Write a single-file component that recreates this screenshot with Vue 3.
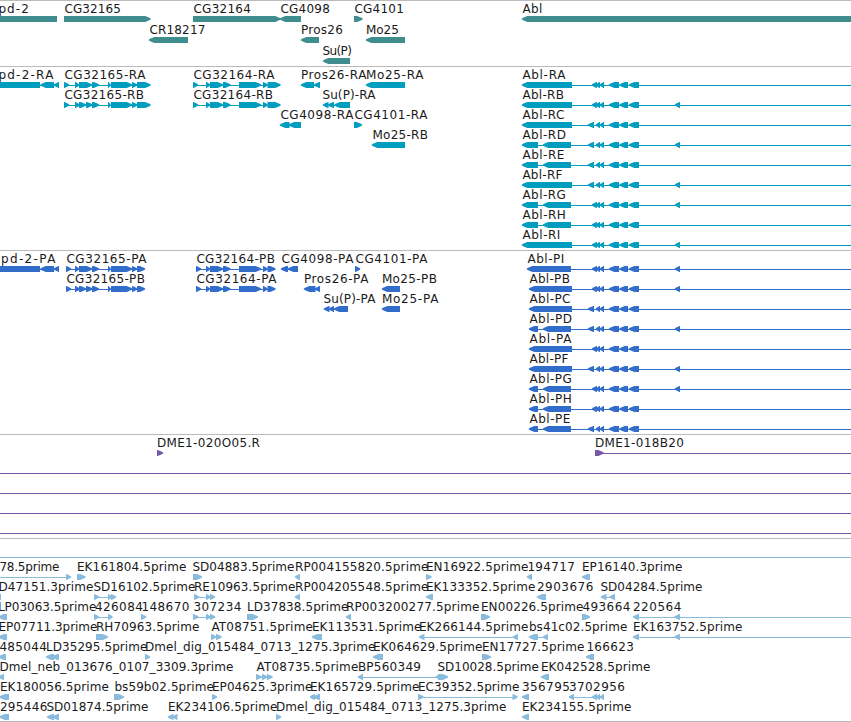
<script setup>
const HEAD = 5.5

// Feature: [row, label, label start, label end, strand, exons, connector end]
const f = (row, label, x, end, dir, exons, lineTo) => ({ row, label, x, end, dir, exons, lineTo })

const geneFeatures = [
  f(0, 'pd-2', -2, 28.5, 'l', [[-12, 57]]),
  f(0, 'CG32165', 64, 120.5, 'r', [[64, 151]]),
  f(1, 'CR18217', 149, 205, 'l', [[148.5, 188]]),
  f(0, 'CG32164', 193, 250.5, 'r', [[193, 281]]),
  f(0, 'CG4098', 280, 329.5, 'l', [[279.5, 301]]),
  f(1, 'Pros26', 300.5, 342.5, 'l', [[300.5, 319]]),
  f(2, 'Su(P)', 322, 351.5, 'l', [[322.5, 350]]),
  f(0, 'CG4101', 354, 403.5, 'r', [[354, 363]]),
  f(1, 'Mo25', 365.5, 398.5, 'l', [[365.5, 405]]),
  f(0, 'Abl', 522, 542, 'l', [[521.5, 870]]),
]

const ablTail = [[608.5, 619], [619, 628], [628.5, 639]]
const near = [[591.5, 597], [595.5, 600], [599.5, 604]]
const far = [[587.5, 594], [595.5, 600], [599.5, 604]]
const distal = [[674.5, 680]]
const abl = (row, label, x, end, head, mid, hasDistal) =>
  f(row, label, x, end, 'l', [...head, ...mid, ...ablTail, ...(hasDistal ? distal : [])], 852)

const rLong = [[521.5, 572]]
const rSplit = [[521.5, 538], [542.5, 571]]
const pLong = [[528.5, 572]]
const pSplit = [[528.5, 538], [542.5, 571]]

const upd = [[-12, 40], [40, 54], [53.5, 59]]
const a165 = (s, e) => [[s, s + 5.5], [75, 79.5], [79, 92.5], [92, 99.5], [108, 111], [111, 132.5], [132, 137.5], [137, e]]
const b165 = (s, e) => [[s, s + 5.5], [75, 80], [79, 86.5], [86, 93], [92, 99.5], [108, 111], [111, 132.5], [132, 137.5], [137, e]]
const c164 = (s, e) => [[s, s + 5.5], [206, 210.5], [210, 223.5], [223, 231], [239, 261.5], [263, 268], [267.5, e]]

const transcriptFeatures = [
  f(0, 'pd-2-RA', -2, 53, 'l', upd),
  f(0, 'CG32165-RA', 64, 145, 'r', a165(64, 151)),
  f(1, 'CG32165-RB', 64, 143.5, 'r', b165(64, 151)),
  f(0, 'CG32164-RA', 193, 274, 'r', c164(193, 281)),
  f(1, 'CG32164-RB', 193, 272.5, 'r', c164(193, 281)),
  f(2, 'CG4098-RA', 280, 353, 'l', [[279.5, 289.5], [288.5, 301]]),
  f(0, 'Pros26-RA', 300.5, 366, 'l', [[300.5, 314], [313.5, 320]]),
  f(0, 'Mo25-RA', 365.5, 423, 'l', [[365.5, 405]]),
  f(1, 'Su(P)-RA', 322, 375, 'l', [[322.5, 328.5], [327.5, 334], [334, 350]]),
  f(2, 'CG4101-RA', 354, 427, 'r', [[354, 362.5]]),
  f(3, 'Mo25-RB', 372, 427.5, 'l', [[371.5, 405]]),
  abl(0, 'Abl-RA', 522, 565, rLong, near, false),
  abl(1, 'Abl-RB', 522, 563.5, rLong, near, true),
  abl(2, 'Abl-RC', 522, 564, rLong, far, false),
  abl(3, 'Abl-RD', 522, 565.5, rSplit, far, true),
  abl(4, 'Abl-RE', 522, 564, rSplit, far, false),
  abl(5, 'Abl-RF', 522, 562, rLong, far, true),
  abl(6, 'Abl-RG', 522, 565.5, rSplit, near, true),
  abl(7, 'Abl-RH', 522, 565.5, rSplit, near, false),
  abl(8, 'Abl-RI', 522, 560, rLong, near, true),
]

const proteinFeatures = [
  f(0, 'pd-2-PA', 0.5, 55, 'l', upd),
  f(0, 'CG32165-PA', 66, 146, 'r', a165(66, 145.5)),
  f(1, 'CG32165-PB', 66, 144.5, 'r', b165(66, 145.5)),
  f(0, 'CG32164-PB', 196, 274.5, 'r', c164(196, 276)),
  f(1, 'CG32164-PA', 196, 276, 'r', c164(196, 276)),
  f(0, 'CG4098-PA', 281, 353, 'l', [[280.5, 288], [287.5, 298]]),
  f(0, 'CG4101-PA', 355, 427, 'r', [[355, 360.5]]),
  f(1, 'Pros26-PA', 303.5, 368, 'l', [[303.5, 315.5], [314.5, 320]]),
  f(1, 'Mo25-PB', 381.5, 436.5, 'l', [[381.5, 400]]),
  f(2, 'Su(P)-PA', 323, 375, 'l', [[323.5, 329.5], [328.5, 334], [333.5, 348]]),
  f(2, 'Mo25-PA', 381.5, 438, 'l', [[381.5, 400]]),
  abl(0, 'Abl-PI', 527, 564, [[526.5, 571]], near, true),
  abl(1, 'Abl-PB', 529, 569.5, pLong, near, true),
  abl(2, 'Abl-PC', 529, 570, pLong, far, false),
  abl(3, 'Abl-PD', 529, 571.5, pSplit, far, true),
  abl(4, 'Abl-PA', 529, 571, pLong, near, false),
  abl(5, 'Abl-PF', 529, 568, pLong, far, true),
  abl(6, 'Abl-PG', 529, 571.5, pSplit, near, true),
  abl(7, 'Abl-PH', 529, 571.5, pSplit, near, false),
  abl(8, 'Abl-PE', 529, 570, pSplit, far, false),
]

const bacFeatures = [
  f(0, 'DME1-020O05.R', 156.5, 259.5, 'r', [[157, 163.5]]),
  f(0, 'DME1-018B20', 594.5, 683.5, 'r', [[595, 604]], 852),
  ...[1, 2, 3, 4].map((row) => f(row, '', 0, 0, 'r', [], 852)),
]

const estFeatures = [
  f(0, '', 0, 0, 'r', [], 852),
  f(1, '78.5prime', -1, 59, 'r', [[-20, -10], [66, 71.5]]),
  f(1, 'EK161804.5prime', 76.5, 186, 'r', [[77, 86]]),
  f(1, 'SD04883.5prime', 192, 294, 'r', [[193, 202.5]]),
  f(1, 'RP004155820.5prime', 294.5, 428, 'l', [[294.5, 300]]),
  f(1, 'EN16922.5prime', 425.5, 528, 'r', [[426, 432]]),
  f(1, '194717', 527, 574.5, 'l', [[526.5, 532]]),
  f(1, 'EP16140.3prime', 581.5, 682, 'l', [[581.5, 590]]),
  f(2, 'D47151.3prime', -2, 93, 'l', [[-8, 1]]),
  f(2, 'SD16102.5prime', 93, 195, 'r', [[94, 99.5], [108, 112.5], [111, 116.5]]),
  f(2, 'RE10963.5prime', 193.5, 295, 'r', [[194, 199.5], [206, 211], [210, 215.5]]),
  f(2, 'RP004205548.5prime', 294.5, 428, 'l', [[294.5, 300]]),
  f(2, 'EK133352.5prime', 425.5, 535, 'l', [[425.5, 433]]),
  f(2, '2903676', 536.5, 593, 'l', [[536.5, 546]]),
  f(2, 'SD04284.5prime', 600, 702, 'l', [[600.5, 606.5], [609, 615]]),
  f(3, 'LP03063.5prime', -2.5, 96, 'l', [[-2, 7]]),
  f(3, '426084', 94.5, 142.5, 'r', [[94, 99.5], [108, 113]]),
  f(3, '148670', 141, 189, 'r', [[141, 146.5]]),
  f(3, '307234', 193, 241, 'r', [[193, 199], [206, 211], [210, 215.5]]),
  f(3, 'LD37838.5prime', 246.5, 348, 'r', [[247, 258.5]]),
  f(3, 'RP003200277.5prime', 345.5, 479, 'l', [[345.5, 351]]),
  f(3, 'EN00226.5prime', 480.5, 583, 'r', [[481, 490.5]]),
  f(3, '493664', 582, 630, 'r', [[582, 590.5]]),
  f(3, '220564', 632.5, 681, 'l', [[632.5, 639], [674, 680]], 852),
  f(4, 'EP07711.3prime', -2, 97, 'l', [[-2, 7]]),
  f(4, 'RH70963.5prime', 95.5, 199, 'r', [[96, 108.5]]),
  f(4, 'AT08751.5prime', 211, 312.5, 'r', [[211, 216.5], [216, 222]]),
  f(4, 'EK113531.5prime', 311.5, 421, 'l', [[311.5, 322]]),
  f(4, 'EK266144.5prime', 418.5, 528, 'l', [[418.5, 424.5], [512.5, 518]]),
  f(4, 'bs41c02.5prime', 528.5, 627, 'l', [[528.5, 538], [542.5, 548]]),
  f(4, 'EK163752.5prime', 632.5, 742, 'l', [[632.5, 639], [674, 680]], 852),
  f(5, '485044', -1, 46.5, 'l', [[-2, 6]]),
  f(5, 'LD35295.5prime', 45.5, 147, 'l', [[45.5, 54], [51.5, 59]]),
  f(5, 'Dmel_dig_015484_0713_1275.3prime', 144.5, 375, 'r', [[145, 150.5]]),
  f(5, 'EK064629.5prime', 372.5, 482, 'l', [[372.5, 383]]),
  f(5, 'EN17727.5prime', 481.5, 584, 'r', [[482, 491.5]]),
  f(5, '166623', 586, 633.5, 'l', [[585.5, 594]]),
  f(6, 'Dmel_neb_013676_0107_3309.3prime', -1, 233, 'l', [[-2, 4]]),
  f(6, 'AT08735.5prime', 256, 358, 'r', [[256, 262], [262, 268], [267, 273]]),
  f(6, 'BP560349', 357.5, 420.5, 'l', [[357.5, 363], [435, 442]]),
  f(6, 'SD10028.5prime', 437, 538.5, 'r', [[438, 448.5]]),
  f(6, 'EK042528.5prime', 540.5, 650, 'l', [[540.5, 549]]),
  f(7, 'EK180056.5prime', -0.5, 108.5, 'l', [[-1, 9]]),
  f(7, 'bs59b02.5prime', 114, 213.5, 'r', [[114, 124.5]]),
  f(7, 'EP04625.3prime', 211.5, 312, 'r', [[212, 217.5]]),
  f(7, 'EK165729.5prime', 309.5, 419, 'l', [[309.5, 315], [313, 320]]),
  f(7, 'EC39352.5prime', 417.5, 519, 'r', [[418, 424], [512.5, 518]]),
  f(7, '356795', 521.5, 569.5, 'l', [[521.5, 529]]),
  f(7, '3702956', 568.5, 624.5, 'l', [[568.5, 574], [591.5, 597], [596, 600], [599.5, 604]]),
  f(8, '295446', -0.5, 47, 'l', [[-1, 9]]),
  f(8, 'SD01874.5prime', 46, 148, 'l', [[46.5, 54], [52, 59]]),
  f(8, 'EK234106.5prime', 167.5, 277, 'l', [[167.5, 173.5], [172, 177.5]]),
  f(8, 'Dmel_dig_015484_0713_1275.3prime', 275.5, 506, 'r', [[276, 281.5]]),
  f(8, 'EK234155.5prime', 521.5, 631, 'l', [[521.5, 529]]),
]

const tracks = [
  { name: 'genes', height: 66, pitch: 21, features: geneFeatures },
  { name: 'transcripts', height: 184, pitch: 20, features: transcriptFeatures },
  { name: 'proteins', height: 184, pitch: 20, features: proteinFeatures },
  { name: 'bacs', height: 104, pitch: 20, features: bacFeatures },
  { name: 'ests', height: 183, pitch: 20, features: estFeatures },
]

// Blunt arrowhead: the flanks bulge slightly before closing on the tip
function arrow([a, b], dir) {
  const tip = dir === 'r' ? b - 0.3 : a + 0.3
  const back = dir === 'r' ? a : b
  const s = dir === 'r' ? 1 : -1
  const head = Math.min(HEAD, b - a - 0.8)
  const neck = tip - s * head
  const mid = tip - s * head * 0.45
  return `M${back} 16H${neck}L${mid} 17.3L${tip} 18.4V19.6L${mid} 20.7L${neck} 22H${back}Z`
}

function lineStart(item) {
  return item.exons.length ? item.exons[0][0] + 2 : 0
}

function lineLength(item) {
  const last = item.exons[item.exons.length - 1]
  const end = item.lineTo ?? last[1] - 2
  return Math.max(0, end - lineStart(item))
}
</script>

<template>
  <main class="browser">
    <section v-for="track in tracks" :key="track.name" class="track" :class="track.name">
      <svg class="canvas" width="851" :height="track.height - 1" :viewBox="`0 1 851 ${track.height - 1}`">
        <g
          v-for="(item, i) in track.features"
          :key="i"
          :transform="`translate(0 ${item.row * track.pitch})`"
        >
          <rect class="shape" :x="lineStart(item)" y="19" :width="lineLength(item)" height="1" />
          <path v-for="(exon, k) in item.exons" :key="k" class="shape" :d="arrow(exon, item.dir)" />
          <text v-if="item.label" :x="item.x + 0.4" y="13" :textLength="item.end - item.x">{{ item.label }}</text>
        </g>
      </svg>
    </section>
  </main>
</template>

<style>
body {
  margin: 0;
  background: #fff;
}
</style>

<style scoped>
.browser {
  display: flex;
  flex-direction: column;
  width: 851px;
  height: 722px;
  overflow: hidden;
  background: #fff;
  border-bottom: 1px solid #bbb;
  box-sizing: border-box;
}

.track {
  border-top: 1px solid #bbb;
}

.canvas {
  display: block;
}

text {
  font-family: "DejaVu Sans", sans-serif;
  font-size: 12px;
  fill: #1a1a1a;
}

.genes .shape { fill: #408d90; }
.transcripts .shape { fill: #009dbf; }
.proteins .shape { fill: #336dcc; }
.bacs .shape { fill: #7558a8; }
.ests .shape { fill: #88bbdd; }
</style>
